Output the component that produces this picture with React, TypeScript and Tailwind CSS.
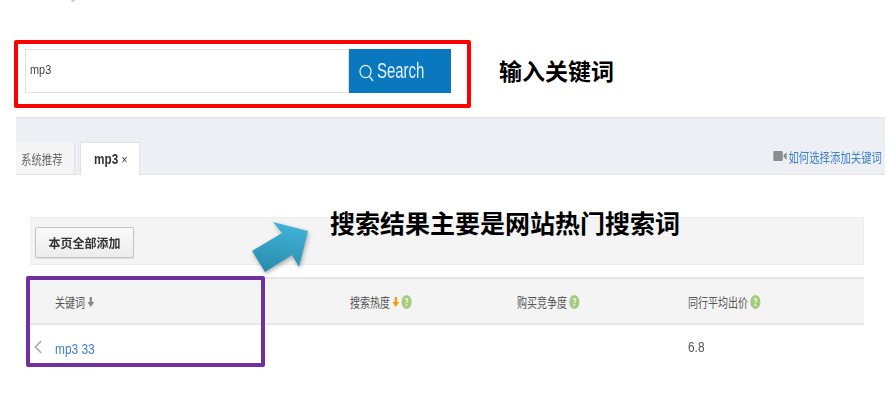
import { LuChevronLeft } from "react-icons/lu";

const font = "font-['Noto_Sans_CJK_SC','Liberation_Sans',sans-serif]";

function Help() {
  return (
    <span className="ml-[3px] inline-flex h-[14px] w-[13px] items-center justify-center rounded-full bg-[#a5cb7f] text-[10px] font-bold leading-none text-[#eef6e4]">
      ?
    </span>
  );
}

function Arrow({ color }: { color: string }) {
  return (
    <svg width="9" height="10" viewBox="0 0 9 10" className="ml-[3px]">
      <path d="M3 0h3v5h3L4.5 10 0 5h3z" fill={color} />
    </svg>
  );
}

export default function App() {
  return (
    <div className={`relative h-[407px] w-[896px] overflow-hidden bg-white ${font}`}>
      <div className="absolute left-[71px] top-0 h-[2px] w-[4px] rounded-b bg-[#cfcfcf]" />

      {/* search box */}
      <div className="ml-[14px] flex items-center pt-[40px]">
        <div className="flex h-[68px] w-[457px] rounded-[2px] border-4 border-[#ff0000] pl-[7px] pt-[5px]">
          <div className="flex h-[44px] w-[324px] items-center border border-[#e0e0e4] pb-[3px] pl-[4px] blur-[0.3px]">
            <span className="origin-left scale-x-[.84] font-['Liberation_Sans'] text-[13px] text-[#444]">mp3</span>
          </div>
          <div className="flex h-[44px] w-[102px] items-center bg-[#0a78bf] pl-[10px] text-[#e4f1fa] blur-[0.3px]">
            <svg width="15" height="18" viewBox="0 0 15 18" fill="none" stroke="currentColor" strokeWidth="1.3" className="mt-[3px]">
              <ellipse cx="6.5" cy="7.5" rx="5.5" ry="6.2" />
              <path d="M10.5 12.5 14 17" />
            </svg>
            <span className="ml-[3px] origin-left scale-x-[.68] pb-[2px] font-['Liberation_Sans'] text-[22px]">Search</span>
          </div>
        </div>
        <span className="ml-[28px] pb-[8px] text-[23px] font-bold text-black">输入关键词</span>
      </div>

      {/* tabs */}
      <div className="ml-[16px] mt-[9px] flex h-[58px] w-[869px] items-end justify-between border-y border-[#e4e4e8] bg-[#eeeff4] blur-[0.3px]">
        <div className="-mb-px flex items-end">
          <div className="flex h-[32px] w-[59px] items-center border-r border-b border-[#e2e2e6] bg-[#f5f5f5] pl-[5px] text-[#666]">
            <span className="origin-left scale-x-[.8] whitespace-nowrap text-[13px]">系统推荐</span>
          </div>
          <div className="ml-[5px] flex h-[33px] w-[60px] items-center border-x border-t border-[#e2e2e6] bg-white pl-[13px] text-[#333]">
            <span className="origin-left scale-x-[.84] whitespace-nowrap font-['Liberation_Sans'] text-[14px] font-bold">
              mp3<span className="ml-[4px] text-[12px] font-normal">×</span>
            </span>
          </div>
        </div>
        <div className="mb-[8px] mr-[3px] flex origin-right scale-x-[.8] items-center whitespace-nowrap text-[13px] text-[#3d7fd0]">
          <svg width="17" height="10" viewBox="0 0 17 10" className="mr-[2px]">
            <rect x="0" y="0" width="12" height="10" rx="1.5" fill="#8c8c8c" />
            <path d="M13 4 17 1v8l-4-3z" fill="#8c8c8c" />
          </svg>
          如何选择添加关键词
        </div>
      </div>

      {/* toolbar */}
      <div className="ml-[30px] mt-[42px] flex h-[48px] w-[834px] items-start border border-[#ececec] bg-[#f4f4f4] pl-[4px] pt-[9px] blur-[0.3px]">
        <button className="h-[31px] w-[99px] rounded-[2px] border border-[#c4c4c4] bg-gradient-to-b from-[#fafafa] to-[#ececec] text-[12px] font-bold text-[#333] shadow-[0_1px_1px_#ddd]">
          本页全部添加
        </button>
      </div>

      {/* table */}
      <div className="ml-[30px] mt-[12px] w-[834px] text-[13px] text-[#555] blur-[0.3px]">
        <div className="flex h-[48px] items-center border-y-2 border-[#e6e6e6] bg-[#f4f4f4] pt-[2px]">
          <div className="w-[320px] pl-[25px]">
            <div className="flex origin-left scale-x-[.77] items-center">
              关键词
              <Arrow color="#888" />
            </div>
          </div>
          <div className="w-[167px]">
            <div className="flex origin-left scale-x-[.77] items-center">
              搜索热度
              <Arrow color="#f90" />
              <Help />
            </div>
          </div>
          <div className="w-[171px]">
            <div className="flex origin-left scale-x-[.77] items-center">
              购买竞争度
              <Help />
            </div>
          </div>
          <div className="flex origin-left scale-x-[.77] items-center">
            同行平均出价
            <Help />
          </div>
        </div>
        <div className="flex h-[44px] items-center">
          <div className="flex w-[658px] items-center">
            <LuChevronLeft className="ml-[-3px] h-[24px] w-[22px] text-[#aaa]" strokeWidth={1.8} />
            <span className="ml-[6px] origin-left scale-x-[.85] pt-[4px] font-['Liberation_Sans'] text-[14px] text-[#3d7fd0]">mp3 33</span>
          </div>
          <span className="origin-left scale-x-[.85] font-['Liberation_Sans'] text-[14px]">6.8</span>
        </div>
      </div>

      {/* annotations */}
      <div className="absolute left-[26px] top-[276px] h-[91px] w-[239px] rounded-[2px] border-4 border-[#7030a0]" />
      <svg width="70" height="60" viewBox="0 0 70 60" className="absolute left-[248px] top-[218px] drop-shadow-[1px_2px_2px_rgba(0,0,0,0.3)]">
        <defs>
          <linearGradient id="arrowFill" x1="0.6" y1="0" x2="0.4" y2="1">
            <stop offset="0" stopColor="#40b4d8" />
            <stop offset="1" stopColor="#2a8cae" />
          </linearGradient>
        </defs>
        <path d="M25 4 60 13 51 49 44 37 17 54 4 33 34 15z" fill="url(#arrowFill)" />
      </svg>
      <span className="absolute left-[330px] top-[205px] text-[25px] font-bold leading-[34px] text-black">
        搜索结果主要是网站热门搜索词
      </span>
    </div>
  );
}
